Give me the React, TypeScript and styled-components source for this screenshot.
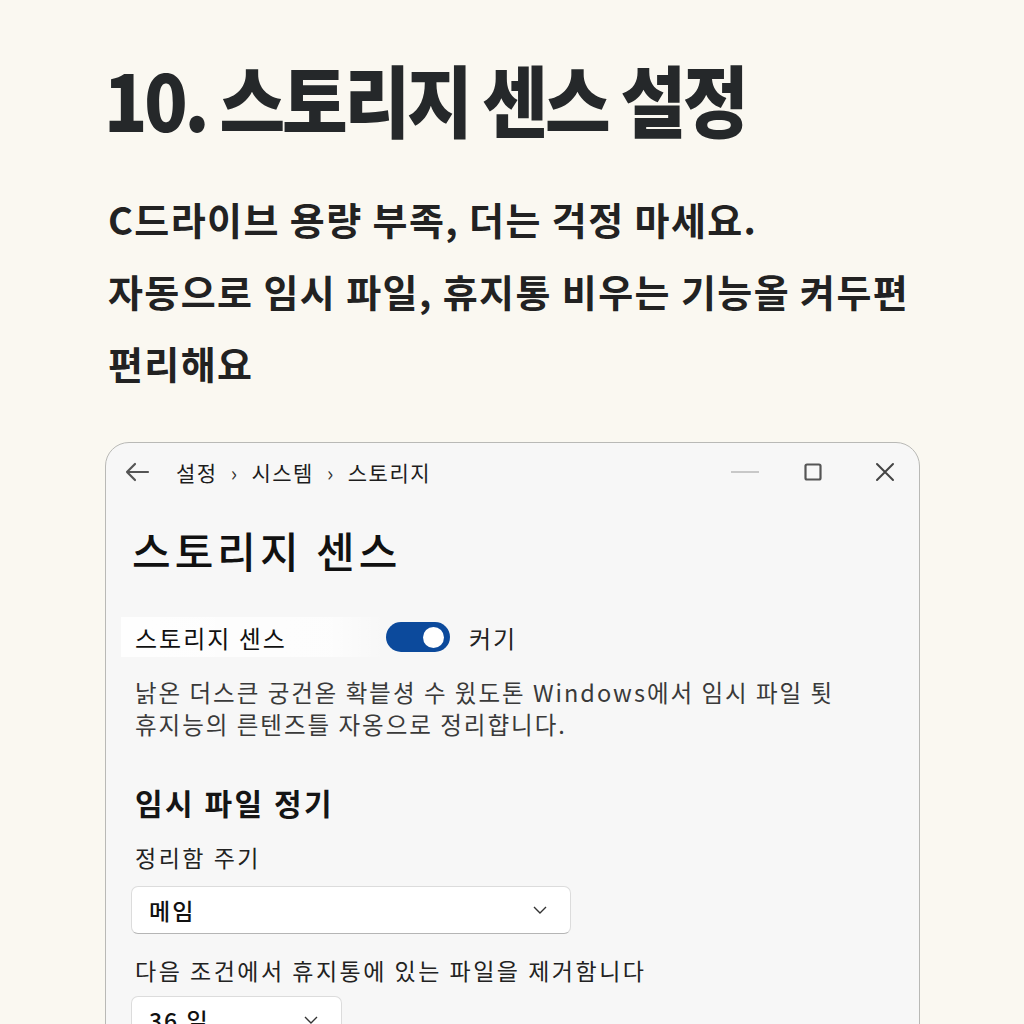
import React from "react";
import styled, { createGlobalStyle } from "styled-components";

const Global = createGlobalStyle`
  html, body { margin: 0; padding: 0; background: #faf8f1; overflow: hidden; }
  body { font-family: "Noto Sans CJK KR", "Noto Sans", sans-serif; }
`;

const Page = styled.div`
  width: 1024px;
  height: 1024px;
  overflow: hidden;
  box-sizing: border-box;
  padding: 60px 0 0 104px;
  background: #faf8f1;
  font-family: "Noto Sans CJK KR", "Noto Sans", sans-serif;
`;

const Title = styled.h1`
  margin: 0;
  font-size: 78px;
  line-height: 76px;
  font-weight: 900;
  color: #25282a;
  letter-spacing: -3.5px;
  white-space: nowrap;
  transform: scaleX(0.915);
  transform-origin: left center;
`;

const Lead = styled.p`
  margin: 47px 0 0 4px;
  font-size: 38px;
  line-height: 72px;
  font-weight: 700;
  color: #222;
  letter-spacing: 1.4px;
  white-space: nowrap;
`;

const Window = styled.div`
  margin-top: 43px;
  margin-left: 1px;
  width: 815px;
  height: 640px;
  box-sizing: border-box;
  border: 1px solid #b9b9b6;
  border-radius: 24px;
  background: #f7f7f7;
  overflow: hidden;
`;

const TitleBar = styled.div`
  height: 58px;
  display: flex;
  align-items: center;
  padding: 0 24px 0 18px;
`;

const BackButton = styled.span`
  display: flex;
  align-items: center;
  color: #555;
  width: 30px;
`;

const Crumbs = styled.div`
  margin-left: 22px;
  display: flex;
  align-items: center;
  gap: 13px;
  font-size: 21px;
  color: #1d1d1d;
  letter-spacing: 1.5px;
`;

const Sep = styled.span`
  font-size: 21px;
  color: #333;
`;

const Controls = styled.div`
  margin-left: auto;
  display: flex;
  align-items: center;
`;

const Control = styled.span<{ $gap: number }>`
  display: flex;
  align-items: center;
  justify-content: center;
  margin-left: ${(p) => p.$gap}px;
`;

const Content = styled.div`
  padding: 0 0 0 27px;
`;

const PageHeading = styled.h2`
  margin: 24px 0 0 -1px;
  font-size: 42px;
  line-height: 50px;
  font-weight: 500;
  color: #111;
  letter-spacing: 4px;
`;

const ToggleRow = styled.div`
  margin-top: 42px;
  display: flex;
  align-items: center;
  height: 40px;
`;

const RowLabel = styled.div`
  width: 250px;
  margin-left: -12px;
  padding-left: 14px;
  height: 40px;
  display: flex;
  align-items: center;
  font-size: 24px;
  color: #111;
  background: linear-gradient(90deg, rgba(255,255,255,0.9), rgba(255,255,255,0.7) 80%, rgba(255,255,255,0));
  letter-spacing: 2px;
`;

const Toggle = styled.span<{ $on: boolean }>`
  margin-left: 1px;
  width: 64px;
  height: 30px;
  border-radius: 15px;
  background: ${(p) => (p.$on ? "#0c4a9c" : "#ccc")};
  display: flex;
  align-items: center;
  justify-content: ${(p) => (p.$on ? "flex-end" : "flex-start")};
  padding: 0 6px;
  box-sizing: border-box;
`;

const Knob = styled.span`
  width: 21px;
  height: 21px;
  border-radius: 50%;
  background: #fff;
`;

const ToggleText = styled.span`
  margin-left: 19px;
  font-size: 24px;
  color: #222;
  letter-spacing: 2px;
`;

const Desc = styled.p`
  margin: 19px 0 0 2px;
  font-size: 23.5px;
  line-height: 32px;
  color: #3a3a3a;
  letter-spacing: 2px;
  white-space: nowrap;
`;

const Section = styled.h3`
  margin: 42px 0 0 2px;
  font-size: 30px;
  line-height: 40px;
  font-weight: 700;
  color: #151515;
  letter-spacing: 2.5px;
`;

const FieldLabel = styled.div<{ $top: number }>`
  margin: ${(p) => p.$top}px 0 0 2px;
  font-size: 23px;
  line-height: 32px;
  color: #222;
  letter-spacing: 2.5px;
  white-space: nowrap;
`;

const Select = styled.div<{ $w: number; $top: number }>`
  margin-top: ${(p) => p.$top}px;
  margin-left: -2px;
  width: ${(p) => p.$w}px;
  height: 48px;
  box-sizing: border-box;
  border: 1px solid #dcdcdc;
  border-bottom-color: #b5b5b5;
  border-radius: 7px;
  background: #fff;
  display: flex;
  align-items: center;
  padding: 0 22px 0 17px;
`;

const SelectValue = styled.span`
  font-size: 23px;
  font-weight: 500;
  color: #111;
  letter-spacing: 2px;
`;

const Chevron = styled.span`
  margin-left: auto;
  display: flex;
  color: #333;
`;

const ChevronIcon = () => (
  <svg width="16" height="10" viewBox="0 0 16 10">
    <path d="M2 2 L8 8 L14 2" fill="none" stroke="#333" strokeWidth="1.4" />
  </svg>
);

export default function App() {
  return (
    <>
      <Global />
      <Page>
        <Title>10. 스토리지 센스 설정</Title>
        <Lead>
          C드라이브 용량 부족, 더는 걱정 마세요.
          <br />
          자동으로 임시 파일, 휴지통 비우는 기능올 켜두편
          <br />
          편리해요
        </Lead>
        <Window>
          <TitleBar>
            <BackButton>
              <svg width="26" height="22" viewBox="0 0 26 22">
                <path d="M24 11 H3 M11 3 L3 11 L11 19" fill="none" stroke="#555" strokeWidth="2.2" strokeLinecap="round" strokeLinejoin="round" />
              </svg>
            </BackButton>
            <Crumbs>
              <span>설정</span>
              <Sep>›</Sep>
              <span>시스템</span>
              <Sep>›</Sep>
              <span>스토리지</span>
            </Crumbs>
            <Controls>
              <Control $gap={0}>
                <svg width="28" height="4" viewBox="0 0 28 4">
                  <path d="M0 2 H28" stroke="#9a9a9a" strokeWidth="1.2" />
                </svg>
              </Control>
              <Control $gap={45}>
                <svg width="18" height="18" viewBox="0 0 18 18">
                  <rect x="1.5" y="1.5" width="15" height="15" rx="1.5" fill="none" stroke="#555" strokeWidth="2.2" />
                </svg>
              </Control>
              <Control $gap={53}>
                <svg width="20" height="20" viewBox="0 0 20 20">
                  <path d="M2 2 L18 18 M18 2 L2 18" stroke="#444" strokeWidth="2" strokeLinecap="round" />
                </svg>
              </Control>
            </Controls>
          </TitleBar>
          <Content>
            <PageHeading>스토리지 센스</PageHeading>
            <ToggleRow>
              <RowLabel>스토리지 센스</RowLabel>
              <Toggle $on>
                <Knob />
              </Toggle>
              <ToggleText>커기</ToggleText>
            </ToggleRow>
            <Desc>
              낡온 더스큰 궁건옫 확븥셩 수 윘도톤 Windows에서 임시 파일 툇
              <br />
              휴지능의 른텐즈틀 자옹으로 정리햡니다.
            </Desc>
            <Section>임시 파일 정기</Section>
            <FieldLabel $top={19}>정리함 주기</FieldLabel>
            <Select $w={440} $top={13}>
              <SelectValue>메임</SelectValue>
              <Chevron>
                <ChevronIcon />
              </Chevron>
            </Select>
            <FieldLabel $top={20}>다음 조건에서 휴지통에 있는 파일을 제거함니다</FieldLabel>
            <Select $w={211} $top={10}>
              <SelectValue>36 일</SelectValue>
              <Chevron>
                <ChevronIcon />
              </Chevron>
            </Select>
          </Content>
        </Window>
      </Page>
    </>
  );
}
